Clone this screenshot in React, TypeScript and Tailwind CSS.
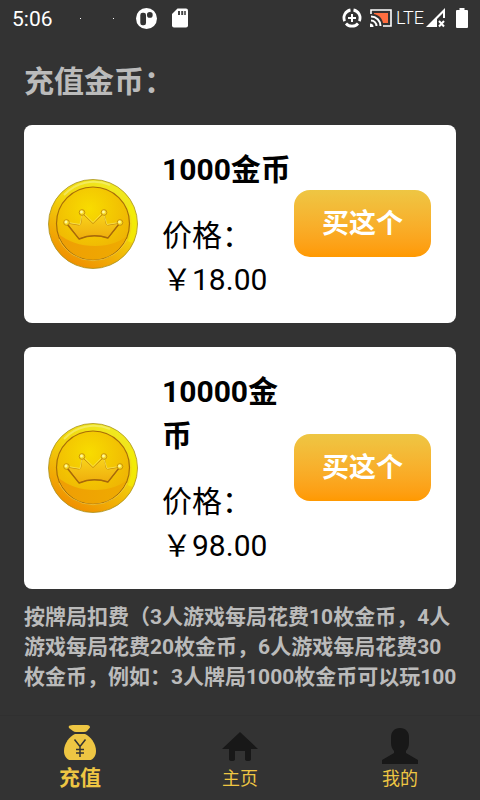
import React from 'react';

interface CoinPack {
  id: string;
  name: string;
  price: string;
}

const packs: CoinPack[] = [
  { id: 'coins-1000', name: '1000金币', price: '￥18.00' },
  { id: 'coins-10000', name: '10000金币', price: '￥98.00' },
];

function StatusBar() {
  return (
    <header className="flex h-9 shrink-0 items-center justify-between px-3 text-white">
      <div className="flex items-center">
        <span className="w-16 pt-0.5 text-[21px] leading-9">5:06</span>
        <span className="ml-1 size-px bg-white" />
        <span className="ml-8 size-px bg-white" />
        <svg className="ml-[22px] size-[21px]" viewBox="0 0 22 22">
          <circle cx="11" cy="11" r="11" fill="#fff" />
          <rect x="4.5" y="5" width="6" height="13" rx="2.4" fill="#333" />
          <circle cx="14.5" cy="7.3" r="3" fill="#333" />
        </svg>
        <svg className="ml-3.5 h-5 w-[18px]" viewBox="0 0 18 20">
          <path d="M6.5 0.5H15a2 2 0 0 1 2 2v15a2 2 0 0 1-2 2H3a2 2 0 0 1-2-2V6z" fill="#fff" />
          <path d="M7 3h2v4H7zM10.2 3h2v4h-2zM13.2 3h1.6v4h-1.6z" fill="#444" />
        </svg>
      </div>
      <div className="flex items-center">
        <svg className="size-5" viewBox="0 0 20 20" fill="none" stroke="#fff">
          <path d="M11.500 2a8 8 0 0 1 5.800 11.200M16 15.500A8 8 0 0 1 4 15.500M2.700 13.200A8 8 0 0 1 8.500 2" strokeWidth="2.800" />
          <path d="M10 6v8M6 10h8" strokeWidth="2" />
        </svg>
        <svg className="ml-2 h-[18px] w-[22px]" viewBox="0 0 22 18" fill="none">
          <path d="M4 4h14v10h-5C12 9 9 6 4 5z" fill="#ff6e40" />
          <path d="M1 5V1h20v16h-8" stroke="#fff" strokeWidth="1.600" />
          <path d="M1 7.500A9.500 9.500 0 0 1 10.500 17M1 11.500A5.500 5.500 0 0 1 6.500 17" stroke="#fff" strokeWidth="2" />
          <path d="M0 14.500a3.500 3.500 0 0 1 3.500 3.500H0z" fill="#fff" />
        </svg>
        <span className="ml-1 text-lg font-light leading-9">LTE</span>
        <svg className="ml-0.5 size-5" viewBox="0 0 20 20">
          <path d="M19 0v10h-2V5L11 11v8H0z" fill="#fff" />
          <path d="M13 13l5 5.500M18 13l-5 5.500" stroke="#fff" strokeWidth="2" />
        </svg>
        <svg className="ml-2.5 h-5 w-3" viewBox="0 0 12 20">
          <path d="M3.500 0h5v2H11a1 1 0 0 1 1 1v16a1 1 0 0 1-1 1H1a1 1 0 0 1-1-1V3a1 1 0 0 1 1-1h2.500z" fill="#fff" />
        </svg>
      </div>
    </header>
  );
}

function CoinIcon({ id }: { id: string }) {
  return (
    <svg className="size-[90px] shrink-0" viewBox="0 0 90 90">
      <defs>
        <linearGradient id={`${id}-rim`} x1="0.8" y1="0.1" x2="0.3" y2="1">
          <stop offset="0" stopColor="#f0ea20" />
          <stop offset="0.4" stopColor="#f2d40c" />
          <stop offset="1" stopColor="#f08c00" />
        </linearGradient>
        <radialGradient id={`${id}-face`} cx="0.45" cy="0.3" r="0.7">
          <stop offset="0" stopColor="#f8dc00" />
          <stop offset="1" stopColor="#eeb004" />
        </radialGradient>
        <linearGradient id={`${id}-base`} x1="0" y1="0" x2="1" y2="0">
          <stop offset="0" stopColor="#ef9d05" />
          <stop offset="1" stopColor="#efac00" />
        </linearGradient>
        <linearGradient id={`${id}-crown`} x1="0" y1="0" x2="0" y2="1">
          <stop offset="0" stopColor="#f9d51c" />
          <stop offset="1" stopColor="#efac0c" />
        </linearGradient>
        <clipPath id={`${id}-clip`}>
          <circle cx="45" cy="44.500" r="36" />
        </clipPath>
      </defs>
      <circle cx="45" cy="45" r="44.500" fill={`url(#${id}-rim)`} stroke="#a8901c" strokeWidth="0.8" />
      <path d="M16 16A41 41 0 0 1 62 6" fill="none" stroke="#f7f29a" strokeWidth="2" opacity="0.5" />
      <path d="M82 27a42 42 0 0 1 0 36" fill="none" stroke="#f4f400" strokeWidth="5" opacity="0.6" />
      <circle cx="45" cy="44.500" r="36.500" fill={`url(#${id}-face)`} stroke="#a86d08" strokeWidth="1.200" />
      <path d="M5 50Q22 67 47 67T85 51V90H5z" fill={`url(#${id}-base)`} clipPath={`url(#${id}-clip)`} />
      <path d="M11 60a37.500 37.500 0 0 0 68 0" fill="none" stroke="#f8d750" strokeWidth="1" opacity="0.6" />
      <path
        d="M19 44L31 46Q33 46 33 43L34 34L45 44.500L56 34L58 44Q58 46 60 46L72 44L60 59Q45 54 31 60z"
        fill={`url(#${id}-crown)`}
        stroke="#c48a0a"
        strokeWidth="1"
        strokeLinejoin="round"
      />
      <path d="M19 45L31 60Q45 54 60 59L71 45" fill="none" stroke="#a8690a" strokeWidth="1.400" />
      <path d="M20 43.500L32 45.500L34.500 33L45 43.500L55 33L59 45.500L71 43.500" fill="none" stroke="#fbe75b" strokeWidth="0.800" />
      <g fill="#f7dc2a" stroke="#bb8208" strokeWidth="0.800">
        <circle cx="18.500" cy="43.500" r="2.800" />
        <circle cx="34" cy="33.500" r="2.800" />
        <circle cx="56" cy="33.500" r="2.800" />
        <circle cx="72" cy="43.500" r="2.800" />
      </g>
      <g fill="#fff8a0">
        <circle cx="18" cy="43" r="1.400" />
        <circle cx="33.500" cy="33" r="1.400" />
        <circle cx="55.500" cy="33" r="1.400" />
        <circle cx="71.500" cy="43" r="1.400" />
      </g>
    </svg>
  );
}

function PackCard({ pack }: { pack: CoinPack }) {
  return (
    <article className="flex items-center rounded-lg bg-white pb-[21px] pl-6 pr-[25px] pt-[23px] text-black">
      <div className="shrink-0 pb-0.5">
        <CoinIcon id={pack.id} />
      </div>
      <div className="ml-6 min-w-0 flex-1 text-[30px] leading-[44px]">
        <h2 className="font-bold">{pack.name}</h2>
        <p className="mt-[22px]">价格：{pack.price}</p>
      </div>
      <button
        type="button"
        className="mb-[3px] h-[67px] shrink-0 rounded-2xl bg-linear-to-b from-[#eec643] to-[#ff9900] px-7 pt-0.5 text-[27px] font-bold text-white"
      >
        买这个
      </button>
    </article>
  );
}

function BottomNav() {
  return (
    <nav className="grid h-[85px] shrink-0 grid-cols-3 border-t border-[#303030] text-[#eec643]">
      <a href="#recharge" aria-current="page" className="flex flex-col items-center pt-2">
        <svg className="size-9" viewBox="0 0 36 36">
          <path d="M8 1.500Q9 1 11 1h14q3 0 3 2.500L25 7q-1 1-3 1h-8q-2 0-3-1L7 4Q6 2 8 1.500z" fill="#eec643" />
          <path d="M13 10h10c5 2 11 9 11 17 0 7-5 10-10 10H12C7 37 2 34 2 27 2 19 8 12 13 10z" fill="#eec643" />
          <path d="M12.500 15.500L18 22.500l5.500-7M18 22v11M14 25.500h8M14 29h8" fill="none" stroke="#333" strokeWidth="1.500" />
        </svg>
        <span className="text-[21px] font-bold leading-9">充值</span>
      </a>
      <a href="#home" className="flex flex-col items-center pt-3">
        <svg className="size-9" viewBox="0 0 36 36">
          <path d="M18 4L36 21h-7v10q0 2-3 2t-3-2V23H13v8q0 2-3 2t-3-2V21H0z" fill="#181818" />
        </svg>
        <span className="text-lg leading-[30px]">主页</span>
      </a>
      <a href="#mine" className="flex flex-col items-center pt-3">
        <svg className="size-9" viewBox="0 0 36 36">
          <path d="M18 0c6 0 9 4 9 9v6c0 3-1 6-3 8v2l12 7v4H0v-4l12-7v-2c-2-2-3-5-3-8V9c0-5 3-9 9-9z" fill="#181818" />
        </svg>
        <span className="text-lg leading-[30px]">我的</span>
      </a>
    </nav>
  );
}

export default function App() {
  return (
    <div
      lang="zh-CN"
      className="flex h-screen flex-col bg-[#333333] font-[Roboto,'Noto_Sans_CJK_SC',sans-serif]"
    >
      <StatusBar />
      <main className="min-h-0 flex-1 overflow-hidden px-6 pt-6 text-[#bbbbbb]">
        <h1 className="text-[30px] font-bold leading-[44px]">充值金币：</h1>
        <div className="mt-[21px] flex flex-col gap-6">
          {packs.map((pack) => (
            <PackCard key={pack.id} pack={pack} />
          ))}
        </div>
        <p className="-mr-1 mt-[13px] text-[21px] font-bold leading-[30px]">
          按牌局扣费（3人游戏每局花费10枚金币，4人游戏每局花费20枚金币，6人游戏每局花费30枚金币，例如：3人牌局1000枚金币可以玩100
        </p>
      </main>
      <BottomNav />
    </div>
  );
}
